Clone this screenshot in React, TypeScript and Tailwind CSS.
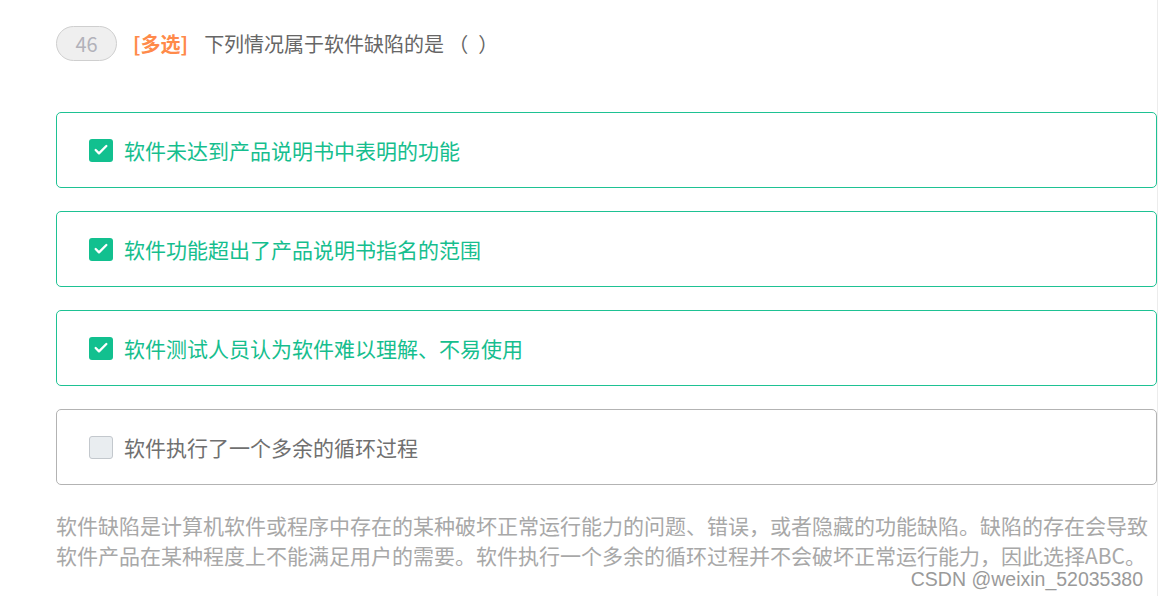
import { Check } from 'lucide-react';

const options = [
  { id: 'A', text: '软件未达到产品说明书中表明的功能', checked: true },
  { id: 'B', text: '软件功能超出了产品说明书指名的范围', checked: true },
  { id: 'C', text: '软件测试人员认为软件难以理解、不易使用', checked: true },
  { id: 'D', text: '软件执行了一个多余的循环过程', checked: false },
];

const font = { fontFamily: '"Microsoft YaHei", "Noto Sans CJK SC", "Noto Sans", sans-serif' };

function OptionCard({ text, checked }: { text: string; checked: boolean }) {
  return (
    <div
      className={`flex h-[76px] items-center rounded-[5px] border pl-[32px] ${
        checked ? 'border-[#1ec293]' : 'border-[#b3b3b3]'
      }`}
    >
      {checked ? (
        <span className="flex h-[23px] w-[24px] items-center justify-center rounded-[3px] bg-[#12c08f]">
          <Check className="h-[16px] w-[16px] text-white" strokeWidth={3.5} />
        </span>
      ) : (
        <span className="h-[23px] w-[24px] rounded-[3px] border border-[#c3c8cd] bg-[#e9edf0]" />
      )}
      <span
        className={`ml-[11px] text-[21px] leading-none ${checked ? 'text-[#16be8e]' : 'text-[#707070]'}`}
      >
        {text}
      </span>
    </div>
  );
}

export default function App() {
  return (
    <div className="relative h-[596px] w-[1159px] bg-white" style={font}>
      <div className="h-full w-[1158px] border-r border-[#ececec] pl-[56px] pt-[26px]">
        <div className="flex items-center">
          <span className="flex h-[35px] w-[61px] items-center justify-center rounded-full border border-[#cfcfcf] bg-[#efefef] text-[20px] text-[#b2b2ba]">
            46
          </span>
          <span className="ml-[16px] text-[20px] font-bold text-[#ff8a4a]">[多选]</span>
          <span className="ml-[16px] flex items-center text-[20px] text-[#666]">
            下列情况属于软件缺陷的是
            <span className="ml-[4px] inline-block w-[20px] text-right">（</span>
            <span className="ml-[10px] inline-block w-[20px] text-left">）</span>
          </span>
        </div>

        <div className="mt-[51px] flex flex-col gap-[23px]">
          {options.map(opt => (
            <OptionCard key={opt.id} text={opt.text} checked={opt.checked} />
          ))}
        </div>

        <p className="mt-[25px] pr-[8px] text-[21px] leading-[30px] text-[#a8a8a8]">
          软件缺陷是计算机软件或程序中存在的某种破坏正常运行能力的问题、错误，或者隐藏的功能缺陷。缺陷的存在会导致软件产品在某种程度上不能满足用户的需要。软件执行一个多余的循环过程并不会破坏正常运行能力，因此选择ABC。
        </p>
      </div>

      <span
        className="absolute right-[16px] top-[565px] text-[19.5px] text-[#9a9a9a]"
        style={{ fontFamily: '"Liberation Sans", Arial, sans-serif', textShadow: '0 0 2px #fff' }}
      >
        CSDN @weixin_52035380
      </span>
    </div>
  );
}
